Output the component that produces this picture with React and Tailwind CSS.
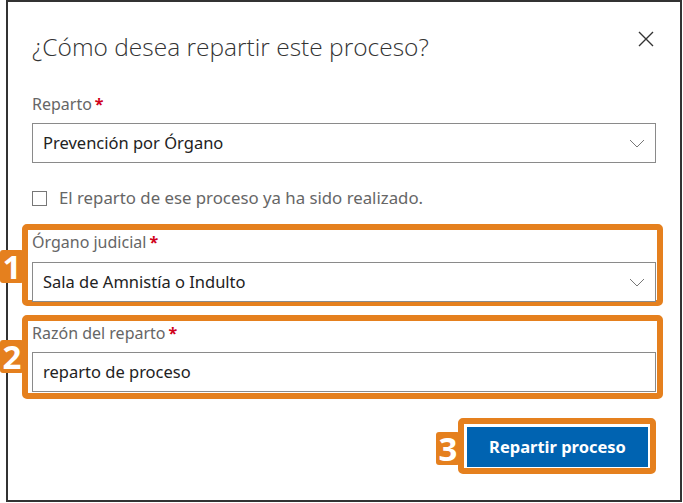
function Chevron() {
  return (
    <svg width="16" height="9" viewBox="0 0 16 9" className="shrink-0">
      <polyline points="1,1 8,8 15,1" fill="none" stroke="#777" strokeWidth="1" />
    </svg>
  );
}

function Label({ children }) {
  return (
    <div className="text-[16px] leading-[20px] text-[#666] whitespace-nowrap">
      {children}
      <span className="text-[#d0021b] font-bold ml-[3px]">*</span>
    </div>
  );
}

function Select({ value }) {
  return (
    <div className="h-[40px] border border-[#8a8a8a] flex items-center justify-between pl-[10px] pr-[10px] bg-white">
      <span className="text-[16.5px] text-[#222]">{value}</span>
      <Chevron />
    </div>
  );
}

function Badge({ n, className }) {
  return (
    <div
      className={
        "absolute w-[24px] h-[33px] bg-[#e5801e] rounded-[3px] flex items-center justify-center text-white font-bold text-[33px] leading-none " +
        className
      }
      style={{ fontFamily: "'Open Sans', 'Noto Sans', sans-serif" }}
    >
      {n}
    </div>
  );
}

export default function App() {
  return (
    <div
      className="w-[683px] h-[503px] bg-white overflow-hidden"
      style={{ fontFamily: "'Noto Sans', 'Open Sans', sans-serif" }}
    >
      <div className="ml-[6px] w-[676px] h-[502px] border-2 border-[#333] px-[24px] relative">
        {/* header */}
        <div className="flex justify-between items-start pt-[29px]">
          <div
            className="text-[24.5px] font-light leading-[32px] text-[#333]"
            style={{ fontFamily: "'Open Sans', 'Noto Sans', sans-serif" }}
          >
            ¿Cómo desea repartir este proceso?
          </div>
          <svg width="16" height="16" viewBox="0 0 16 16" className="mt-[0px] mr-[2px]">
            <path d="M1 1 L15 15 M15 1 L1 15" stroke="#333" strokeWidth="1.4" />
          </svg>
        </div>

        {/* Reparto */}
        <div className="mt-[31px]">
          <Label>Reparto</Label>
          <div className="mt-[9px]">
            <Select value="Prevención por Órgano" />
          </div>
        </div>

        {/* checkbox */}
        <div className="mt-[24px] h-[22px] flex items-center gap-[12px]">
          <div className="w-[15px] h-[15px] border border-[#777] bg-white" />
          <span className="text-[16.8px] text-[#666]">El reparto de ese proceso ya ha sido realizado.</span>
        </div>

        {/* Órgano judicial */}
        <div className="relative mt-[23px]">
          <div className="absolute left-[-10px] right-[-7px] top-[-8px] bottom-[-4px] border-[6px] border-[#e5801e] rounded-[5px] pointer-events-none" />
          <Badge n="1" className="left-[-32px] top-[18px]" />
          <Label>Órgano judicial</Label>
          <div className="mt-[10px] relative">
            <Select value="Sala de Amnistía o Indulto" />
          </div>
        </div>

        {/* Razón del reparto */}
        <div className="relative mt-[21px]">
          <div className="absolute left-[-10px] right-[-7px] top-[-8px] bottom-[-7px] border-[6px] border-[#e5801e] rounded-[5px] pointer-events-none" />
          <Badge n="2" className="left-[-32px] top-[17px]" />
          <Label>Razón del reparto</Label>
          <div className="mt-[9px] h-[40px] border border-[#8a8a8a] flex items-center pl-[10px]">
            <span className="text-[16.5px] text-[#222]">reparto de proceso</span>
          </div>
        </div>

        {/* button */}
        <div className="flex justify-end mt-[35px] mr-[8px]">
          <div className="relative">
            <div className="absolute left-[-9px] right-[-8px] top-[-9px] bottom-[-7px] border-[6px] border-[#e5801e] rounded-[5px] pointer-events-none" />
            <Badge n="3" className="left-[-31px] top-[5px]" />
            <button className="w-[181px] h-[40px] bg-[#0063b1] text-white font-bold text-[16.5px] relative z-10">
              Repartir proceso
            </button>
          </div>
        </div>
      </div>
    </div>
  );
}
